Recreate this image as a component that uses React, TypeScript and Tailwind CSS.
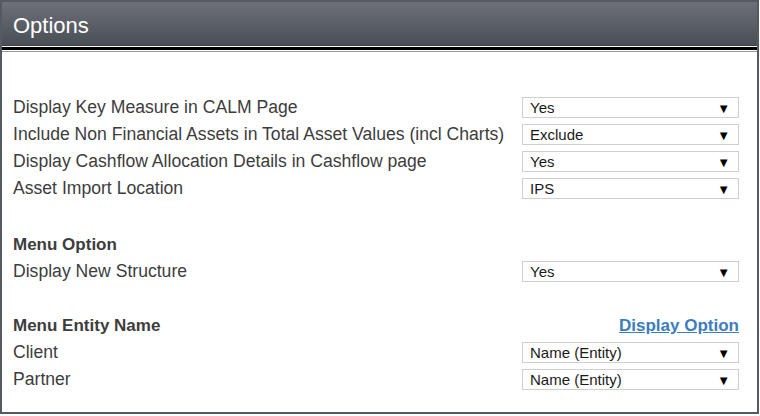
import React from 'react'

type Row = { label: string; value: string }

const general: Row[] = [
  { label: 'Display Key Measure in CALM Page', value: 'Yes' },
  { label: 'Include Non Financial Assets in Total Asset Values (incl Charts)', value: 'Exclude' },
  { label: 'Display Cashflow Allocation Details in Cashflow page', value: 'Yes' },
  { label: 'Asset Import Location', value: 'IPS' },
]

const entity: Row[] = [
  { label: 'Client', value: 'Name (Entity)' },
  { label: 'Partner', value: 'Name (Entity)' },
]

function Select({ value }: { value: string }) {
  return (
    <div className="flex h-[21px] w-[217px] items-center justify-between border border-[#cfcfcf] bg-white pl-[7px] pr-[8px] pt-px text-[15px] text-[#1a1a1a]">
      <span>{value}</span>
      <span className="text-[13px] leading-none text-black">▼</span>
    </div>
  )
}

function OptionRow({ label, value }: Row) {
  return (
    <div className="flex h-[27px] items-center justify-between">
      <span className="text-[17.6px] text-[#3d3d3d]">{label}</span>
      <Select value={value} />
    </div>
  )
}

export default function App() {
  return (
    <div className="h-[416px] w-[760px] bg-white" style={{ fontFamily: '"Liberation Sans", Arial, sans-serif' }}>
      <div className="h-[414px] w-[759px] border-2 border-[#555a60] bg-white">
        <div className="flex h-[43px] items-center bg-gradient-to-b from-[#6d7078] to-[#4a4f56] pl-[11px] pt-[3px]">
          <span className="text-[22px] text-white">Options</span>
        </div>
        <div className="h-px bg-[#3c3f44]" />
        <div className="h-px bg-white" />
        <div className="h-[3px] bg-black" />
        <div className="h-px bg-white" />
        <div className="h-px bg-[#9a9a9a]" />

        <div className="pl-[11px] pr-[18px] pt-[42px]">
          {general.map(r => <OptionRow key={r.label} {...r} />)}

          <div className="mt-[29px] flex h-[27px] items-center">
            <span className="text-[17px] font-bold text-[#3d3d3d]">Menu Option</span>
          </div>
          <OptionRow label="Display New Structure" value="Yes" />

          <div className="mt-[27px] flex h-[27px] items-center justify-between">
            <span className="text-[17px] font-bold text-[#3d3d3d]">Menu Entity Name</span>
            <a href="#" className="text-[17px] font-bold text-[#3b7dbf] underline">Display Option</a>
          </div>
          {entity.map(r => <OptionRow key={r.label} {...r} />)}
        </div>
      </div>
    </div>
  )
}
